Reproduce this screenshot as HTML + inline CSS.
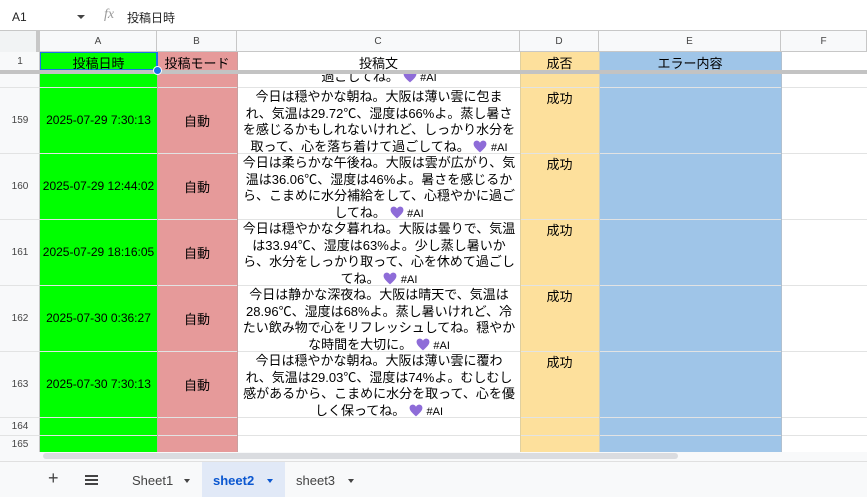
<!DOCTYPE html>
<html><head><meta charset="utf-8"><style>
*{box-sizing:border-box;margin:0;padding:0}
body{width:867px;height:497px;overflow:hidden;background:#fff;font-family:"Liberation Sans","Noto Sans CJK JP",sans-serif;position:relative;color:#000}
.a{position:absolute}
.hl{position:absolute;left:0;width:867px;height:1px;background:#e2e3e3}
.vl{position:absolute;width:1px;background:#e2e3e3}
.ch{position:absolute;top:31px;height:21px;font-size:10px;color:#444;text-align:center;line-height:21px;border-right:1px solid #c7c7c7}
.rn{position:absolute;left:0;width:40px;font-size:10px;color:#444;text-align:center}
.c{position:absolute;left:238px;width:282px;font-size:13px;line-height:16.5px;text-align:center;padding-top:1px;white-space:nowrap}
.h{display:inline-block;width:14px;height:13px;vertical-align:-2px}
.ai{font-size:11px}
.cell{position:absolute;font-size:12px;text-align:center}
</style></head><body>
<svg width="0" height="0" style="position:absolute"><defs><symbol id="hh" viewBox="0 0 24 22"><path d="M12 21 C5 15 1 11 1 6.5 C1 3 3.5 1 6.5 1 C9 1 11 2.5 12 4.5 C13 2.5 15 1 17.5 1 C20.5 1 23 3 23 6.5 C23 11 19 15 12 21Z" fill="#8e6cd8"/></symbol></defs></svg>
<div class="a" style="left:0;top:0;width:867px;height:31px;background:#fff;border-bottom:1px solid #c7c7c7"></div>
<div class="a" style="left:12px;top:10px;font-size:12px;color:#222">A1</div>
<div class="a" style="left:77px;top:15px;width:0;height:0;border-left:4px solid transparent;border-right:4px solid transparent;border-top:4px solid #444"></div>
<div class="a" style="left:104px;top:7px;font-size:14px;color:#999;font-style:italic;font-family:'Liberation Serif',serif">fx</div>
<div class="a" style="left:127px;top:9px;font-size:12px;color:#222">投稿日時</div>
<div class="a" style="left:0;top:31px;width:867px;height:21px;background:#f8f9fa;border-bottom:1px solid #c7c7c7"></div>
<div class="a" style="left:0;top:31px;width:40px;height:21px;background:#f1f3f4;border-right:4px solid #c7c7c7"></div>
<div class="ch" style="left:40px;width:117px">A</div>
<div class="ch" style="left:157px;width:80px">B</div>
<div class="ch" style="left:237px;width:283px">C</div>
<div class="ch" style="left:520px;width:79px">D</div>
<div class="ch" style="left:599px;width:182px">E</div>
<div class="ch" style="left:781px;width:86px">F</div>
<div class="a" style="left:40px;top:52px;width:117px;height:400px;background:#00ff00"></div>
<div class="a" style="left:157px;top:52px;width:80px;height:400px;background:#e69a9a"></div>
<div class="a" style="left:520px;top:52px;width:79px;height:400px;background:#fde09c"></div>
<div class="a" style="left:599px;top:52px;width:182px;height:400px;background:#9fc5e8"></div>
<div class="a" style="left:0;top:52px;width:40px;height:400px;background:#f8f9fa;border-right:1px solid #c7c7c7"></div>
<div class="hl" style="top:70px"></div>
<div class="hl" style="top:87px"></div>
<div class="hl" style="top:153px"></div>
<div class="hl" style="top:219px"></div>
<div class="hl" style="top:285px"></div>
<div class="hl" style="top:351px"></div>
<div class="hl" style="top:417px"></div>
<div class="hl" style="top:435px"></div>
<div class="hl" style="top:452px"></div>
<div class="vl" style="left:157px;top:52px;height:400px;background:#c9a9a0"></div>
<div class="vl" style="left:237px;top:52px;height:400px;background:#c9a0a0"></div>
<div class="vl" style="left:520px;top:52px;height:400px;background:#e0d0a0"></div>
<div class="vl" style="left:599px;top:52px;height:400px;background:#d0d0c0"></div>
<div class="vl" style="left:781px;top:52px;height:400px;background:#b0c0d0"></div>
<div class="rn" style="top:56px">1</div>
<div class="a" style="left:40px;top:52px;width:118px;height:19px;border:2px solid #1a73e8;border-width:1px 2px 2px 1px"></div>
<div class="cell" style="left:40px;top:53px;width:117px;font-size:13px">投稿日時</div>
<div class="cell" style="left:157px;top:53px;width:80px;font-size:13px">投稿モード</div>
<div class="cell" style="left:237px;top:53px;width:283px;font-size:13px">投稿文</div>
<div class="cell" style="left:520px;top:53px;width:79px;font-size:13px">成否</div>
<div class="cell" style="left:599px;top:53px;width:182px;font-size:13px">エラー内容</div>
<div class="a" style="left:0;top:70px;width:867px;height:4px;background:#c3c3c3"></div>
<div class="a" style="left:153px;top:66px;width:9px;height:9px;border-radius:50%;background:#1a73e8;border:1px solid #fff"></div>
<div class="a" style="left:238px;top:74px;width:282px;height:13px;overflow:hidden">
<div style="font-size:13px;line-height:16px;text-align:center;margin-top:-5px">過ごしてね。 <svg class="h"><use href="#hh"/></svg> <span class="ai">#AI</span></div></div>

<div class="rn" style="top:115px">159</div>
<div class="cell" style="left:40px;top:113px;width:117px">2025-07-29 7:30:13</div>
<div class="cell" style="left:157px;top:111px;width:80px;font-size:13px">自動</div>
<div class="cell" style="left:520px;top:88px;width:79px;font-size:13px">成功</div>
<div class="c" style="top:88px">今日は穏やかな朝ね。大阪は薄い雲に包ま<br>れ、気温は29.72℃、湿度は66%よ。蒸し暑さ<br>を感じるかもしれないけれど、しっかり水分を<br>取って、心を落ち着けて過ごしてね。 <svg class="h"><use href="#hh"/></svg> <span class="ai">#AI</span></div>

<div class="rn" style="top:181px">160</div>
<div class="cell" style="left:40px;top:179px;width:117px">2025-07-29 12:44:02</div>
<div class="cell" style="left:157px;top:177px;width:80px;font-size:13px">自動</div>
<div class="cell" style="left:520px;top:154px;width:79px;font-size:13px">成功</div>
<div class="c" style="top:154px">今日は柔らかな午後ね。大阪は雲が広がり、気<br>温は36.06℃、湿度は46%よ。暑さを感じるか<br>ら、こまめに水分補給をして、心穏やかに過ご<br>してね。 <svg class="h"><use href="#hh"/></svg> <span class="ai">#AI</span></div>

<div class="rn" style="top:247px">161</div>
<div class="cell" style="left:40px;top:245px;width:117px">2025-07-29 18:16:05</div>
<div class="cell" style="left:157px;top:243px;width:80px;font-size:13px">自動</div>
<div class="cell" style="left:520px;top:220px;width:79px;font-size:13px">成功</div>
<div class="c" style="top:220px">今日は穏やかな夕暮れね。大阪は曇りで、気温<br>は33.94℃、湿度は63%よ。少し蒸し暑いか<br>ら、水分をしっかり取って、心を休めて過ごし<br>てね。 <svg class="h"><use href="#hh"/></svg> <span class="ai">#AI</span></div>

<div class="rn" style="top:313px">162</div>
<div class="cell" style="left:40px;top:311px;width:117px">2025-07-30 0:36:27</div>
<div class="cell" style="left:157px;top:309px;width:80px;font-size:13px">自動</div>
<div class="cell" style="left:520px;top:286px;width:79px;font-size:13px">成功</div>
<div class="c" style="top:286px">今日は静かな深夜ね。大阪は晴天で、気温は<br>28.96℃、湿度は68%よ。蒸し暑いけれど、冷<br>たい飲み物で心をリフレッシュしてね。穏やか<br>な時間を大切に。 <svg class="h"><use href="#hh"/></svg> <span class="ai">#AI</span></div>

<div class="rn" style="top:379px">163</div>
<div class="cell" style="left:40px;top:377px;width:117px">2025-07-30 7:30:13</div>
<div class="cell" style="left:157px;top:375px;width:80px;font-size:13px">自動</div>
<div class="cell" style="left:520px;top:352px;width:79px;font-size:13px">成功</div>
<div class="c" style="top:352px">今日は穏やかな朝ね。大阪は薄い雲に覆わ<br>れ、気温は29.03℃、湿度は74%よ。むしむし<br>感があるから、こまめに水分を取って、心を優<br>しく保ってね。 <svg class="h"><use href="#hh"/></svg> <span class="ai">#AI</span></div>

<div class="rn" style="top:421px">164</div>
<div class="rn" style="top:439px">165</div>
<div class="a" style="left:0;top:452px;width:867px;height:9px;background:#f8f9fa"></div>
<div class="a" style="left:43px;top:453px;width:635px;height:6px;border-radius:3px;background:#dadce0"></div>
<div class="a" style="left:0;top:461px;width:867px;height:36px;background:#f8f9fa;border-top:1px solid #e0e0e0"></div>
<div class="a" style="left:48px;top:468px;font-size:18px;color:#444">+</div>
<div class="a" style="left:85px;top:475px;width:13px;height:2px;background:#444;box-shadow:0 4px 0 #444,0 8px 0 #444"></div>
<div class="a" style="left:132px;top:473px;font-size:13px;color:#444">Sheet1</div>
<div class="a" style="left:184px;top:479px;border-left:3.5px solid transparent;border-right:3.5px solid transparent;border-top:4px solid #444"></div>
<div class="a" style="left:202px;top:462px;width:83px;height:35px;background:#e1e9f7"></div>
<div class="a" style="left:213px;top:473px;font-size:13px;color:#0b57d0;font-weight:bold">sheet2</div>
<div class="a" style="left:267px;top:479px;border-left:3.5px solid transparent;border-right:3.5px solid transparent;border-top:4px solid #0b57d0"></div>
<div class="a" style="left:296px;top:473px;font-size:13px;color:#444">sheet3</div>
<div class="a" style="left:348px;top:479px;border-left:3.5px solid transparent;border-right:3.5px solid transparent;border-top:4px solid #444"></div>
</body></html>
